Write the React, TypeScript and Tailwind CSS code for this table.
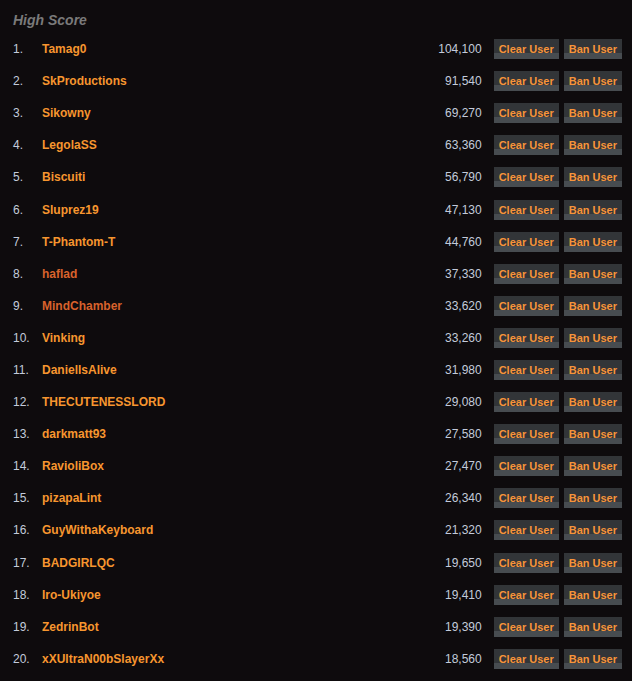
import React from "react";

const PLAYERS: { name: string; score: number; alt?: boolean }[] = [
  { name: "Tamag0", score: 104100 },
  { name: "SkProductions", score: 91540 },
  { name: "Sikowny", score: 69270 },
  { name: "LegolaSS", score: 63360 },
  { name: "Biscuiti", score: 56790 },
  { name: "Sluprez19", score: 47130 },
  { name: "T-Phantom-T", score: 44760 },
  { name: "haflad", score: 37330, alt: true },
  { name: "MindChamber", score: 33620, alt: true },
  { name: "Vinking", score: 33260 },
  { name: "DaniellsAlive", score: 31980 },
  { name: "THECUTENESSLORD", score: 29080 },
  { name: "darkmatt93", score: 27580 },
  { name: "RavioliBox", score: 27470 },
  { name: "pizapaLint", score: 26340 },
  { name: "GuyWithaKeyboard", score: 21320 },
  { name: "BADGIRLQC", score: 19650 },
  { name: "Iro-Ukiyoe", score: 19410 },
  { name: "ZedrinBot", score: 19390 },
  { name: "xXUltraN00bSlayerXx", score: 18560 },
];

function AdminButton({ label }: { label: string }) {
  return (
    <button className="h-5 px-[5px] text-[11px] font-bold leading-5 text-[#f7943a] bg-[linear-gradient(to_bottom,#323538_68%,#474c50_68%)]">
      {label}
    </button>
  );
}

export default function App() {
  return (
    <div className="min-h-[681px] w-full bg-[#0e0b0d] font-['Liberation_Sans',Arial,sans-serif] pt-[10px]">
      <h2 className="px-[13px] h-[23px] text-[14px] leading-[21px] font-bold italic text-[#7a7a7a]">
        High Score
      </h2>
      <div className="flex flex-col">
        {PLAYERS.map((p, i) => (
          <div key={p.name} className="flex items-center h-[32.1px] pl-[13px] pr-[10px] text-[12px]">
            <span className="w-[29px] text-[#c3cbdb]">{i + 1}.</span>
            <span className={`flex-1 font-bold ${p.alt ? "text-[#d8622c]" : "text-[#f7962f]"}`}>
              {p.name}
            </span>
            <span className="text-[#c3cbdb] mr-3">{p.score.toLocaleString("en-US")}</span>
            <div className="flex gap-[5px]">
              <AdminButton label="Clear User" />
              <AdminButton label="Ban User" />
            </div>
          </div>
        ))}
      </div>
    </div>
  );
}
